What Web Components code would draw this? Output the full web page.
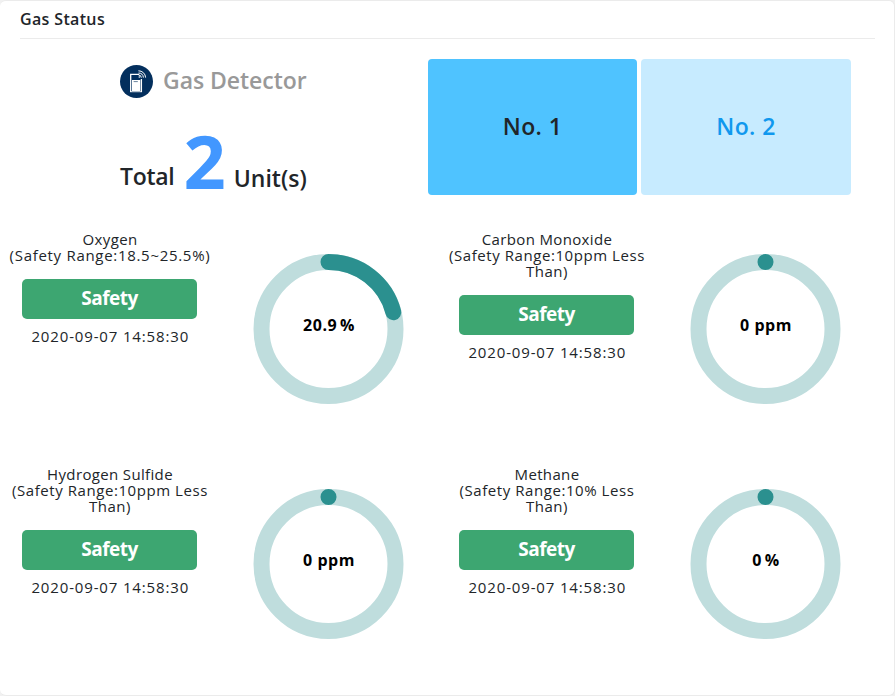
<!DOCTYPE html>
<html lang="en">
<head>
<meta charset="utf-8">
<title>Gas Status</title>
<style>
html,body{margin:0;height:100%}
body{background:#f1f1f1;color:#212529;font-family:"Open Sans","Noto Sans",sans-serif;overflow:hidden}
</style>
</head>
<body>
<gas-card heading="Gas Status">
  <detector-summary slot="summary" label="Gas Detector" count="2"></detector-summary>
  <unit-tile slot="tiles" active>No. 1</unit-tile>
  <unit-tile slot="tiles">No. 2</unit-tile>
  <gas-reading percent="20.9" style="--range-track:.7px;--value-gap:-2px">
    <span slot="name">Oxygen</span><span slot="range">(Safety Range:18.5~25.5%)</span>
    <span slot="state">Safety</span><span slot="time">2020-09-07 14:58:30</span><span slot="value">20.9 %</span>
  </gas-reading>
  <gas-reading percent="0">
    <span slot="name">Carbon Monoxide</span><span slot="range">(Safety Range:10ppm Less<br>Than)</span>
    <span slot="state">Safety</span><span slot="time">2020-09-07 14:58:30</span><span slot="value">0 ppm</span>
  </gas-reading>
  <gas-reading percent="0">
    <span slot="name">Hydrogen Sulfide</span><span slot="range">(Safety Range:10ppm Less<br>Than)</span>
    <span slot="state">Safety</span><span slot="time">2020-09-07 14:58:30</span><span slot="value">0 ppm</span>
  </gas-reading>
  <gas-reading percent="0" style="--value-gap:-2px">
    <span slot="name">Methane</span><span slot="range">(Safety Range:10% Less<br>Than)</span>
    <span slot="state">Safety</span><span slot="time">2020-09-07 14:58:30</span><span slot="value">0 %</span>
  </gas-reading>
</gas-card>
<script>
const define = (name, render) => customElements.define(name, class extends HTMLElement {
  connectedCallback() {
    if (!this.shadowRoot) this.attachShadow({mode: 'open'}).innerHTML = render(this);
  }
});

define('gas-card', el => `
<style>
:host{display:block;box-sizing:border-box;width:895px;height:696px;border:1px solid #ebebeb;border-left:0;border-radius:6px;background:#fff}
header{box-sizing:border-box;margin:0 19px 0 20px;height:38px;padding-top:6px;border-bottom:1px solid #ebebeb;font-size:16px;line-height:24px;font-weight:650;letter-spacing:.35px}
.top{display:grid;grid-template-columns:428px 424px;height:192px}
.tiles{display:grid;grid-template-columns:209px 210px;gap:4px;height:136px;padding-top:20px}
.grid{display:grid;grid-template-columns:437px 437px;grid-auto-rows:235px}
</style>
<header>${el.getAttribute('heading')}</header>
<div class="top"><slot name="summary"></slot><div class="tiles"><slot name="tiles"></slot></div></div>
<div class="grid"><slot></slot></div>`);

define('detector-summary', el => `
<style>
:host{display:block;padding:26px 0 0 120px;font-size:23px;font-weight:650}
.title{display:flex;align-items:center;gap:10px;height:33px;color:#999}
.title span{line-height:33px;margin-top:-2px;letter-spacing:-.05px}
.total{display:flex;align-items:flex-end;height:100px;line-height:30px}
b{font-size:74px;line-height:75px;font-weight:700;color:#4297ff;margin:0 8px 0 9px}
</style>
<div class="title">
<svg width="33" height="33" viewBox="0 0 33 33"><circle cx="16.5" cy="16.5" r="16.5" fill="#032f5d"/>
<path d="M10.7 27V9.3h8.5M21.4 14v13" fill="none" stroke="#fff" stroke-width="1.3"/><path d="M10 26.3h12v.9H10z" fill="#fff"/><path d="M12 15h8.3v11H12z" fill="#fff"/><path d="M13.6 16.6h4.2" stroke="#5a7794" stroke-width=".9"/>
<g fill="none" stroke="#fff" stroke-width="1"><path d="M18.4 5.8a7 7 0 0 1 7.2 6.8M18.5 8a5 5 0 0 1 4.9 4.6M18.6 10.1a2.6 2.6 0 0 1 2.7 2.6"/></g><circle cx="19.3" cy="12" r=".8" fill="#fff"/></svg>
<span>${el.getAttribute('label')}</span></div>
<div class="total"><span style="letter-spacing:-.3px;padding-bottom:7px">Total</span><b>${el.getAttribute('count')}</b><span style="padding-bottom:5px">Unit(s)</span></div>`);

define('unit-tile', () => `
<style>
:host{display:flex;align-items:center;justify-content:center;padding-bottom:2px;box-sizing:border-box;border-radius:4px;background:#c7ebff;color:#1098ee;font-size:23px;font-weight:650;letter-spacing:.4px}
:host([active]){background:#4fc3ff;color:#212529}
</style>
<slot></slot>`);

define('gas-reading', el => {
  const circumference = 2 * Math.PI * 67;
  const filled = Math.max(.01, circumference * el.getAttribute('percent') / 100);
  return `
<style>
:host{display:grid;grid-template-columns:219px 218px}
::slotted(span){display:block}
.info{display:flex;flex-direction:column;align-items:center;text-align:center;font-size:15px;line-height:16px;font-weight:370;white-space:nowrap}
.name{letter-spacing:.35px;padding-left:1px}
.range{letter-spacing:var(--range-track,.56px);padding-left:1px}
.state{width:175px;height:40px;margin:16px 0 9px;border-radius:5px;background:#3da671;color:#fff;font-size:19px;line-height:38px;font-weight:700;letter-spacing:-.5px}
.time{letter-spacing:.85px;padding-left:1.5px}
.ring{display:grid;width:151px;height:151px;margin:23px 0 0 34px;place-items:center}
.ring>*{grid-area:1/1}
.value{color:#000;font-size:16px;line-height:20px;font-weight:700;letter-spacing:.55px;word-spacing:var(--value-gap,0);margin-top:-9px;padding-left:1px}
</style>
<div class="info"><div class="name"><slot name="name"></slot></div><div class="range"><slot name="range"></slot></div>
<div class="state"><slot name="state"></slot></div><div class="time"><slot name="time"></slot></div></div>
<div class="ring"><svg width="151" height="151" viewBox="0 0 151 151" fill="none" stroke-width="16">
<circle cx="75.5" cy="75" r="67" stroke="#bfdddd"/>
<circle cx="75.5" cy="75" r="67" stroke="#2b908f" stroke-linecap="round" stroke-dasharray="${filled} ${circumference}" transform="rotate(-90 75.5 75)"/>
</svg><div class="value"><slot name="value"></slot></div></div>`;
});
</script>
</body>
</html>
